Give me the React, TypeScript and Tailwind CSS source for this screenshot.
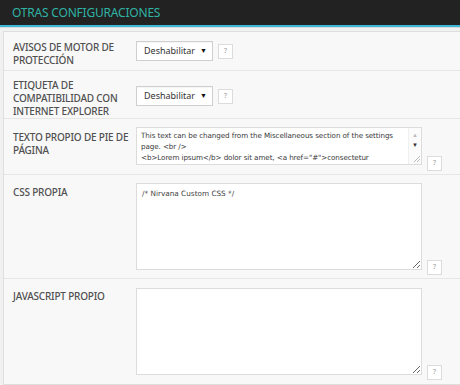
import React from "react";

const labelCls =
  "w-[123px] shrink-0 text-[10px] leading-[13px] font-medium uppercase text-[#505050] tracking-[-0.2px]";

const mono = { fontFamily: '"DejaVu Sans", Verdana, sans-serif' };

function Help({ className = "" }: { className?: string }) {
  return (
    <div
      className={`w-[15px] h-[15px] border border-[#dcdcdc] bg-white flex items-center justify-center text-[7px] text-[#999] ${className}`}
    >
      ?
    </div>
  );
}

function Select() {
  return (
    <div className="w-[77px] h-[20px] border border-[#cfcfcf] bg-white flex items-center justify-between pl-[7px] pr-[5px] text-[9px] text-[#333] shadow-[inset_0_1px_1px_rgba(0,0,0,0.04)]">
      <span>Deshabilitar</span>
      <span className="text-[7px] text-[#111]">▼</span>
    </div>
  );
}

export default function App() {
  return (
    <div
      className="w-[460px] h-[385px] bg-[#f1f1f1] overflow-hidden"
      style={{ fontFamily: '"Noto Sans", "Open Sans", sans-serif' }}
    >
      <div className="h-[25px] bg-[#222222] flex items-center pl-[12px]">
        <span className="text-[12px] text-[#2fb3a4] tracking-[-0.2px]">OTRAS CONFIGURACIONES</span>
      </div>
      <div className="h-[2px] bg-[#3db7d8]" />
      <div className="h-[1px] bg-[#dadada]" />
      <div className="ml-[3px] mt-[3px] border-l border-t border-b border-[#dedede] bg-[#f8f8f8]">
        {/* Row 1 */}
        <div className="flex h-[39px] border-b border-[#e6e6e6] pl-[9px] pt-[9px]">
          <div className={labelCls}>Avisos de motor de protección</div>
          <div className="flex items-start gap-[5px]">
            <Select />
            <Help className="mt-[3px]" />
          </div>
        </div>
        {/* Row 2 */}
        <div className="flex h-[48px] border-b border-[#e6e6e6] pl-[9px] pt-[8px]">
          <div className={labelCls}>Etiqueta de compatibilidad con Internet Explorer</div>
          <div className="flex items-start gap-[5px] pt-[7px]">
            <Select />
            <Help className="mt-[3px]" />
          </div>
        </div>
        {/* Row 3 */}
        <div className="flex h-[56px] border-b border-[#e6e6e6] pl-[9px] pt-[8px]">
          <div className={`${labelCls} pt-[4px]`}>Texto propio de pie de página</div>
          <div className="flex items-start gap-[5px]">
            <div className="w-[286px] h-[38px] border border-[#dcdcdc] bg-white flex">
              <div
                className="flex-1 px-[4px] pt-[2px] text-[7.2px] leading-[11px] text-[#3a3a3a] overflow-hidden whitespace-nowrap tracking-[-0.1px]"
                style={mono}
              >
                <div>This text can be changed from the Miscellaneous section of the settings</div>
                <div>page. &lt;br /&gt;</div>
                <div>&lt;b&gt;Lorem ipsum&lt;/b&gt; dolor sit amet, &lt;a href="#"&gt;consectetur</div>
              </div>
              <div className="w-[13px] flex flex-col items-center border-l border-[#f0f0f0] bg-[#fbfbfb]">
                <span className="mt-[3px] text-[6px] leading-[8px] text-[#bbb]">▲</span>
                <span className="mt-[2px] text-[6px] leading-[8px] text-[#333]">▼</span>
                <div className="flex-1" />
                <svg width="9" height="9" viewBox="0 0 9 9" className="mb-[1px] ml-[2px]">
                  <path d="M8 2 L2 8 M8 5 L5 8" stroke="#aaa" strokeWidth="0.8" />
                </svg>
              </div>
            </div>
            <Help className="mt-[29px]" />
          </div>
        </div>
        {/* Row 4 */}
        <div className="flex h-[104px] border-b border-[#e6e6e6] pl-[9px] pt-[8px]">
          <div className={`${labelCls} pt-[3px]`}>CSS propia</div>
          <div className="flex items-start gap-[5px]">
            <textarea
              readOnly
              className="w-[286px] h-[87px] border border-[#dcdcdc] bg-white px-[5px] py-[4px] text-[7.3px] leading-[11px] text-[#444] resize-y outline-none"
              style={mono}
              defaultValue="/* Nirvana Custom CSS */"
            />
            <Help className="mt-[77px]" />
          </div>
        </div>
        {/* Row 5 */}
        <div className="flex h-[105px] pl-[9px] pt-[9px]">
          <div className={`${labelCls} pt-[2px]`}>Javascript propio</div>
          <div className="flex items-start gap-[5px]">
            <textarea
              readOnly
              className="w-[286px] h-[87px] border border-[#dcdcdc] bg-white px-[5px] py-[4px] text-[7.3px] text-[#444] resize-y outline-none"
              defaultValue=""
            />
            <Help className="mt-[77px]" />
          </div>
        </div>
      </div>
    </div>
  );
}
